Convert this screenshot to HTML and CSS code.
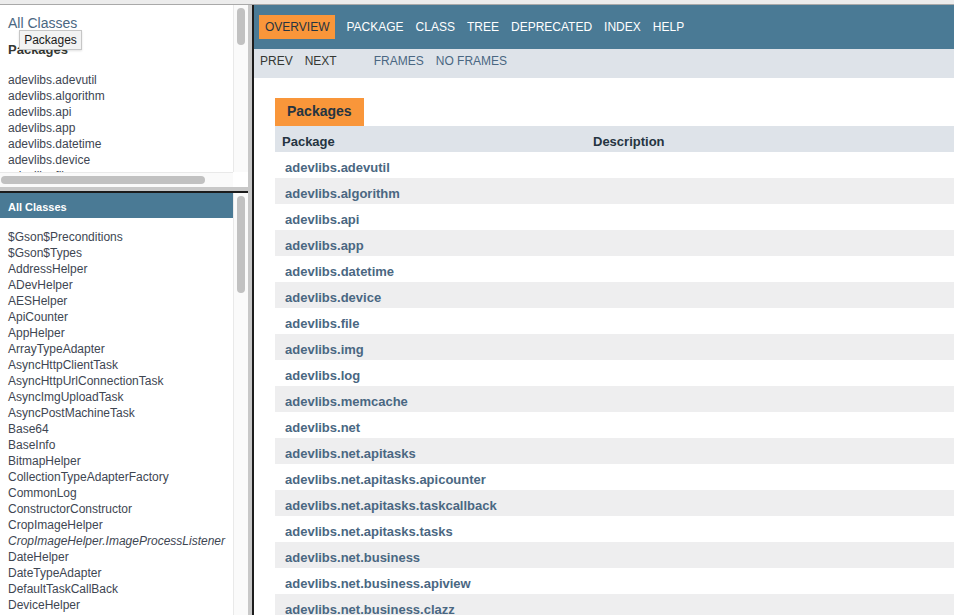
FILE: index.html
```html
<!DOCTYPE html>
<html>
<head>
<meta charset="utf-8">
<title>Overview</title>
<link rel="stylesheet" href="styles.css">
</head>
<body>
<div class="topstrip"></div>
<div class="frames">
  <div class="left">
    <div class="pkgframe">
      <div class="pkgcontent">
        <div class="index-header"><a class="link" href="#">All Classes</a></div>
        <h2 class="index-title">Packages</h2>
        <ul class="index-list">
          <li>adevlibs.adevutil</li>
          <li>adevlibs.algorithm</li>
          <li>adevlibs.api</li>
          <li>adevlibs.app</li>
          <li>adevlibs.datetime</li>
          <li>adevlibs.device</li>
          <li>adevlibs.file</li>
        </ul>
        <div class="tooltip">Packages</div>
      </div>
      <div class="vtrack"><div class="vthumb vthumb-top"></div></div>
      <div class="htrack"><div class="hthumb"></div></div>
      <div class="corner"></div>
    </div>
    <div class="hsep"></div>
    <div class="classframe">
      <div class="classcontent">
        <h1 class="bar">All Classes</h1>
        <ul class="index-list class-list">
          <li>$Gson$Preconditions</li>
          <li>$Gson$Types</li>
          <li>AddressHelper</li>
          <li>ADevHelper</li>
          <li>AESHelper</li>
          <li>ApiCounter</li>
          <li>AppHelper</li>
          <li>ArrayTypeAdapter</li>
          <li>AsyncHttpClientTask</li>
          <li>AsyncHttpUrlConnectionTask</li>
          <li>AsyncImgUploadTask</li>
          <li>AsyncPostMachineTask</li>
          <li>Base64</li>
          <li>BaseInfo</li>
          <li>BitmapHelper</li>
          <li>CollectionTypeAdapterFactory</li>
          <li>CommonLog</li>
          <li>ConstructorConstructor</li>
          <li>CropImageHelper</li>
          <li class="italic">CropImageHelper.ImageProcessListener</li>
          <li>DateHelper</li>
          <li>DateTypeAdapter</li>
          <li>DefaultTaskCallBack</li>
          <li>DeviceHelper</li>
        </ul>
      </div>
      <div class="vtrack"><div class="vthumb vthumb-bottom"></div></div>
    </div>
  </div>
  <div class="vsep"></div>
  <div class="right">
    <div class="topnav">
      <ul class="navlist">
        <li class="active">Overview</li>
        <li>Package</li>
        <li>Class</li>
        <li>Tree</li>
        <li>Deprecated</li>
        <li>Index</li>
        <li>Help</li>
      </ul>
    </div>
    <div class="subnav">
      <ul class="subnavlist">
        <li>Prev</li>
        <li>Next</li>
      </ul>
      <ul class="subnavlist">
        <li class="sublink">Frames</li>
        <li class="sublink">No&nbsp;Frames</li>
      </ul>
    </div>
    <div class="content">
      <div class="caption"><span class="caption-tab">Packages</span></div>
      <table class="summary">
        <colgroup><col class="col-first"><col></colgroup>
        <thead>
          <tr><th>Package</th><th>Description</th></tr>
        </thead>
        <tbody>
          <tr><td>adevlibs.adevutil</td><td></td></tr>
          <tr><td>adevlibs.algorithm</td><td></td></tr>
          <tr><td>adevlibs.api</td><td></td></tr>
          <tr><td>adevlibs.app</td><td></td></tr>
          <tr><td>adevlibs.datetime</td><td></td></tr>
          <tr><td>adevlibs.device</td><td></td></tr>
          <tr><td>adevlibs.file</td><td></td></tr>
          <tr><td>adevlibs.img</td><td></td></tr>
          <tr><td>adevlibs.log</td><td></td></tr>
          <tr><td>adevlibs.memcache</td><td></td></tr>
          <tr><td>adevlibs.net</td><td></td></tr>
          <tr><td>adevlibs.net.apitasks</td><td></td></tr>
          <tr><td>adevlibs.net.apitasks.apicounter</td><td></td></tr>
          <tr><td>adevlibs.net.apitasks.taskcallback</td><td></td></tr>
          <tr><td>adevlibs.net.apitasks.tasks</td><td></td></tr>
          <tr><td>adevlibs.net.business</td><td></td></tr>
          <tr><td>adevlibs.net.business.apiview</td><td></td></tr>
          <tr><td>adevlibs.net.business.clazz</td><td></td></tr>
        </tbody>
      </table>
    </div>
  </div>
</div>
</body>
</html>
```
FILE: styles.css
```css
html, body {
  margin: 0;
  padding: 0;
  height: 100%;
  overflow: hidden;
  background: #ffffff;
  font-family: "Liberation Sans", Arial, sans-serif;
  color: #353833;
}

ul {
  list-style: none;
  margin: 0;
  padding: 0;
}

.topstrip {
  height: 4px;
  background: #ececec;
  border-bottom: 1px solid #a9a9a9;
}

.frames {
  display: flex;
  height: 610px;
}

.left {
  width: 248px;
  display: flex;
  flex-direction: column;
}

/* ---------- top-left frame ---------- */
.pkgframe {
  height: 182px;
  display: grid;
  grid-template-columns: 233px 15px;
  grid-template-rows: 167px 15px;
}

.pkgcontent {
  position: relative;
  overflow: hidden;
  padding: 10px 0 0 8px;
  background: #ffffff;
}

.index-header {
  font-size: 14px;
  line-height: 16px;
}

.link {
  color: #4a6782;
  text-decoration: none;
}

.index-title {
  margin: 11px 0 0;
  font-size: 13px;
  line-height: 15px;
  font-weight: bold;
  color: #353833;
}

.index-list {
  margin-top: 14px;
  font-size: 12px;
  white-space: nowrap;
}

.index-list li {
  padding-top: 2px;
  line-height: 14px;
  color: #3e4652;
}

.italic {
  font-style: italic;
}

.tooltip {
  position: absolute;
  left: 19px;
  top: 25px;
  width: 61px;
  height: 18px;
  background: #f2f2f2;
  border: 1px solid #c6c6c6;
  font-size: 12px;
  line-height: 18px;
  color: #1b1b1b;
  text-align: center;
  box-shadow: 0 1px 2px rgba(0, 0, 0, 0.12);
}

.vtrack {
  background: #fafafa;
  border-left: 1px solid #e9e9e9;
  padding: 3px 0 0 3px;
}

.vthumb {
  width: 8px;
  border-radius: 4px;
  background: #c1c1c1;
}

.vthumb-top {
  height: 37px;
}

.vthumb-bottom {
  height: 97px;
}

.htrack {
  background: #fafafa;
  border-top: 1px solid #e9e9e9;
  padding: 3px 0 0 1px;
}

.hthumb {
  width: 204px;
  height: 8px;
  border-radius: 4px;
  background: #c1c1c1;
}

.corner {
  background: #ffffff;
}

.hsep {
  height: 4px;
  background: #c8c8c8;
  border-bottom: 2px solid #1c1c1c;
}

/* ---------- bottom-left frame ---------- */
.classframe {
  flex: 1;
  min-height: 0;
  display: grid;
  grid-template-columns: 233px 15px;
}

.classcontent {
  overflow: hidden;
  background: #ffffff;
}

.bar {
  margin: 0;
  height: 25px;
  box-sizing: border-box;
  padding: 8px 5px 0 8px;
  background: #4a7a95;
  color: #ffffff;
  font-size: 11px;
  line-height: 13px;
  font-weight: bold;
}

.class-list {
  margin-top: 10px;
  padding-left: 8px;
}

.vsep {
  width: 4px;
  background: #c8c8c8;
  border-right: 2px solid #1c1c1c;
}

/* ---------- right frame ---------- */
.right {
  flex: 1;
  min-width: 0;
  overflow: hidden;
  background: #ffffff;
}

.topnav {
  height: 34px;
  padding: 10px 0 0 5px;
  background: #4a7a95;
  font-size: 12px;
}

.navlist {
  display: flex;
}

.navlist li {
  padding: 5px 6px;
  line-height: 14px;
  color: #ffffff;
  text-transform: uppercase;
}

.navlist li.active {
  margin-right: 5px;
  background: #f9963a;
  color: #253441;
}

.subnav {
  display: flex;
  gap: 25px;
  height: 14px;
  padding: 5px 0 10px;
  background: #dee3e9;
  font-size: 12px;
}

.subnavlist {
  display: flex;
}

.subnavlist li {
  padding: 0 6px;
  line-height: 14px;
  text-transform: uppercase;
  color: #353833;
}

.subnavlist li.sublink {
  color: #4a6782;
}

.content {
  padding: 20px 0 0 21px;
}

.caption {
  display: flex;
}

.caption-tab {
  padding: 5px 12px 7px;
  height: 16px;
  line-height: 16px;
  background: #f9963a;
  color: #253441;
  font-size: 14px;
  font-weight: bold;
}

.summary {
  width: 100%;
  border-collapse: collapse;
  table-layout: fixed;
}

.col-first {
  width: 311px;
}

.summary th {
  padding: 8px 3px 3px 7px;
  background: #dee3e9;
  text-align: left;
  font-size: 13px;
  line-height: 15px;
  font-weight: bold;
  color: #253441;
}

.summary td {
  padding: 8px 3px 3px 10px;
  font-size: 13px;
  line-height: 15px;
  font-weight: bold;
  color: #4a6782;
  white-space: nowrap;
}

.summary tbody tr:nth-child(even) {
  background: #eeeeef;
}
```
